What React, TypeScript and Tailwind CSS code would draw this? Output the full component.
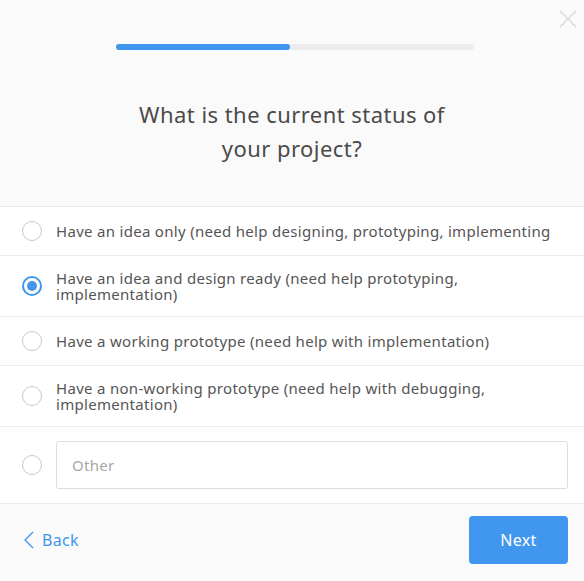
import { useState } from "react";

const options = [
  "Have an idea only (need help designing, prototyping, implementing",
  "Have an idea and design ready (need help prototyping, implementation)",
  "Have a working prototype (need help with implementation)",
  "Have a non-working prototype (need help with debugging, implementation)",
];

function Radio({ checked }: { checked: boolean }) {
  return checked ? (
    <span className="flex h-5 w-5 shrink-0 items-center justify-center rounded-full border-2 border-[#4196f0]">
      <span className="h-2.5 w-2.5 rounded-full bg-[#4196f0]" />
    </span>
  ) : (
    <span className="h-5 w-5 shrink-0 rounded-full border border-[#c8c8c8] bg-white" />
  );
}

export default function App() {
  const [selected, setSelected] = useState(1);

  return (
    <div className="relative flex h-[581px] w-[584px] flex-col bg-white text-[#555] [font-family:'Noto_Sans',Lato,sans-serif]">
      <div className="relative flex h-[207px] flex-col items-center border-b border-[#e8e8e8] bg-[#fafafa] pt-[44px]">
        <button className="absolute right-[7px] top-[10px] text-[#dcdcdc]">
          <svg width="18" height="18" viewBox="0 0 18 18" stroke="currentColor" strokeWidth="1.6" fill="none">
            <path d="M1 1L17 17M17 1L1 17" />
          </svg>
        </button>
        <div className="ml-[6px] h-[6px] w-[358px] rounded-full bg-[#ececec]">
          <div className="h-full w-[174px] rounded-full bg-[#4196f0]" />
        </div>
        <h1 className="mt-[47px] w-[340px] text-center text-[22px] leading-[34px] tracking-[0.45px] text-[#4a4a4a]">
          What is the current status of your project?
        </h1>
      </div>

      {options.map((o, i) => (
        <div
          key={i}
          onClick={() => setSelected(i)}
          className={`flex cursor-pointer items-center gap-[14px] border-b border-[#ececec] pl-[22px] pr-4 ${
            i % 2 === 1 ? "h-[61px]" : "h-[49px]"
          }`}
        >
          <Radio checked={selected === i} />
          <span className="text-[15px] leading-[16px] tracking-[0.3px]">{o}</span>
        </div>
      ))}

      <div className="flex h-[77px] items-center gap-[14px] border-b border-[#ececec] pl-[22px] pr-4">
        <Radio checked={selected === 4} />
        <input
          placeholder="Other"
          className="h-[48px] flex-1 rounded-[3px] border border-[#dedede] px-[15px] text-[15px] tracking-[0.3px] text-[#555] outline-none placeholder:text-[#a8a8a8]"
        />
      </div>

      <div className="flex flex-1 items-center justify-between bg-[#fafafa] pb-[5px] pl-[24px] pr-4">
        <button className="flex items-center gap-[8px] text-[16px] tracking-[0.3px] text-[#4196f0]">
          <svg width="10" height="18" viewBox="0 0 10 18" fill="none" stroke="currentColor" strokeWidth="1.3">
            <path d="M9 1L1 9L9 17" />
          </svg>
          Back
        </button>
        <button className="h-[48px] w-[99px] rounded-[4px] bg-[#4196f0] text-[16px] tracking-[0.3px] text-white">Next</button>
      </div>
    </div>
  );
}
